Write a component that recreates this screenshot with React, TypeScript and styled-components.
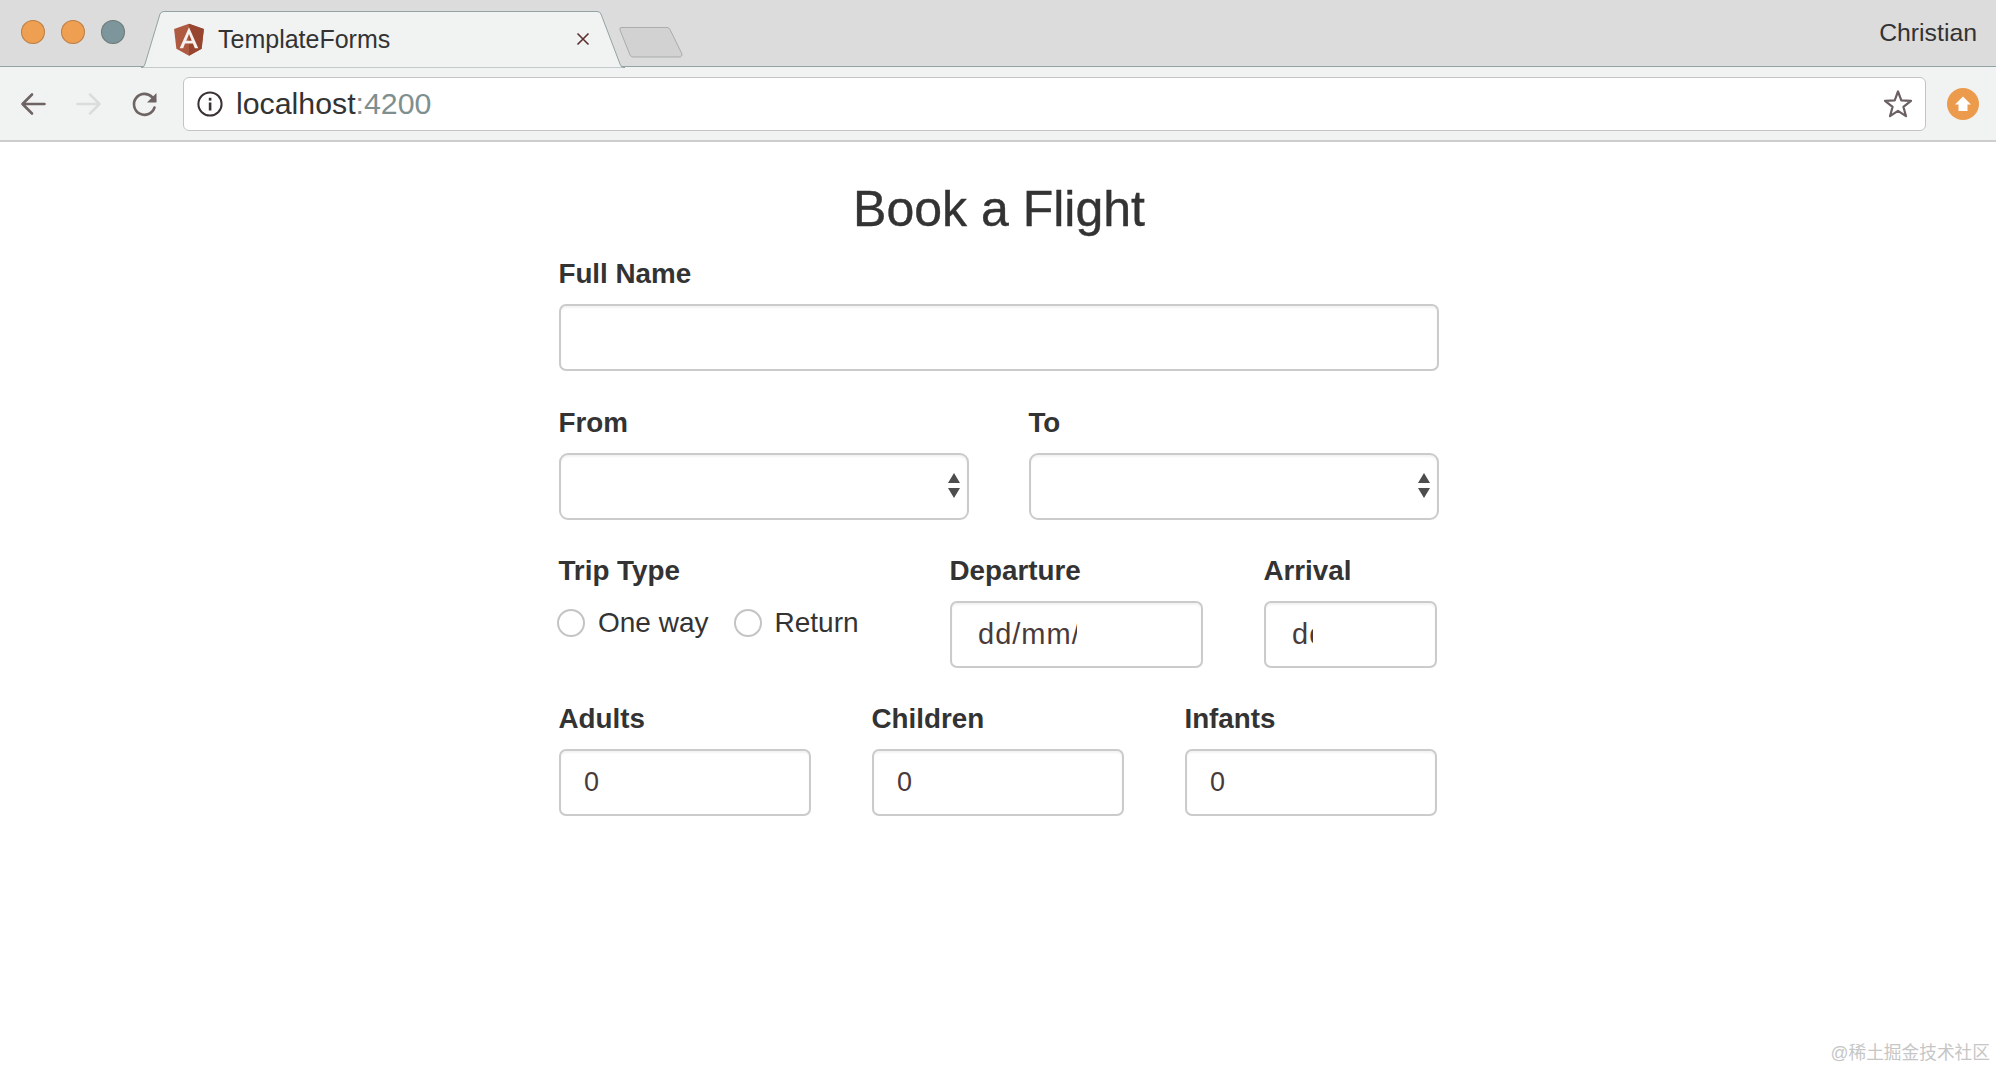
import * as React from "react";
import styled, { createGlobalStyle } from "styled-components";

const FLIGHT_FONT = `"Liberation Sans", Arial, sans-serif`;

const GlobalStyle = createGlobalStyle`
  html, body {
    margin: 0;
    padding: 0;
    height: 100%;
    background: #fff;
    overflow: hidden;
  }
  body {
    font-family: ${FLIGHT_FONT};
    color: #333;
  }
`;

export default function App() {
  return (
    <>
      <GlobalStyle />
      <Page>
        <TabStrip>
          <Lights>
            <Light color="#ef9f52" />
            <Light color="#ef9f52" />
            <Light color="#7c969c" />
          </Lights>
          <Tab>
            <TabShape viewBox="0 0 484 57" preserveAspectRatio="none">
              <path
                d="M0 56.5 H1 Q3 56.5 4 53 L19 3 Q20 0.5 23 0.5 H456 Q459 0.5 460 3 L479 53 Q480 56.5 483 56.5 H484 V57 H0 Z"
                fill="#f1f2f2"
                stroke="#93a3a3"
                strokeWidth="1"
              />
            </TabShape>
            <AngularLogo viewBox="0 0 250 250">
              <polygon points="125,30 31.9,63.2 46.1,186.3 125,230 203.9,186.3 218.1,63.2" fill="#ad5a40" />
              <polygon points="125,30 125,230 203.9,186.3 218.1,63.2" fill="#97452f" />
              <path
                d="M125 52.1 66.8 182.6h21.7l11.7-29.2h49.4l11.7 29.2h21.7L125 52.1zM142 135.4h-34l17-40.9 17 40.9z"
                fill="#f4f1ee"
              />
            </AngularLogo>
            <TabTitle>TemplateForms</TabTitle>
            <TabClose viewBox="0 0 14 14">
              <path d="M1.5 1.5 12.5 12.5M12.5 1.5 1.5 12.5" stroke="#5e2f2f" strokeWidth="1.6" />
            </TabClose>
          </Tab>
          <NewTab viewBox="0 0 64 32">
            <path
              d="M2 1.5H48Q50 1.5 51 3.5L62.5 27Q64 31 60 31H14Q12 31 11 29L1 4Q0.5 1.5 2 1.5Z"
              fill="#d2d2d2"
              stroke="#a9adad"
            />
          </NewTab>
          <ProfileName>Christian</ProfileName>
        </TabStrip>

        <Toolbar>
          <NavIcon viewBox="0 0 28 28" stroke="#6e6464">
            <path d="M25.5 14H3.5M13 4.5 3.5 14l9.5 9.5" />
          </NavIcon>
          <NavIcon viewBox="0 0 28 28" stroke="#dcdcdc">
            <path d="M2.5 14h22M15 4.5l9.5 9.5-9.5 9.5" />
          </NavIcon>
          <NavIcon viewBox="0 0 28 28" stroke="#6e6464">
            <path d="M23.5 17.5A10.5 10.5 0 1 1 21 7L24 10" />
            <path d="M25.5 3v9.5H16z" fill="#6e6464" stroke="none" />
          </NavIcon>
          <AddressBar>
            <InfoIcon viewBox="0 0 26 26">
              <circle cx="13" cy="13" r="11.6" fill="none" stroke="#3a3232" strokeWidth="2" />
              <rect x="11.8" y="11.5" width="2.6" height="8" fill="#3a3232" />
              <rect x="11.8" y="6.8" width="2.6" height="2.8" fill="#3a3232" />
            </InfoIcon>
            <UrlHost>
              localhost<UrlPort>:4200</UrlPort>
            </UrlHost>
            <StarIcon viewBox="0 0 30 30">
              <path
                d="M15 2.5 18.3 11.4 28 11.8 20.4 17.8 23 27.2 15 21.8 7 27.2 9.6 17.8 2 11.8 11.7 11.4Z"
                fill="none"
                stroke="#6a5f62"
                strokeWidth="2.2"
                strokeLinejoin="round"
              />
            </StarIcon>
          </AddressBar>
          <UpdateBadge viewBox="0 0 32 32">
            <circle cx="16" cy="16" r="16" fill="#ec9b4d" />
            <path d="M16 8.5 24 16.5H20.5V23H11.5V16.5H8Z" fill="#fff" />
          </UpdateBadge>
        </Toolbar>

        <FormColumn>
          <Title>Book a Flight</Title>

          <Field>
            <Label>Full Name</Label>
            <TextInput type="text" />
          </Field>

          <TwoColumns>
            <Field>
              <Label>From</Label>
              <SelectField />
            </Field>
            <Field>
              <Label>To</Label>
              <SelectField />
            </Field>
          </TwoColumns>

          <TripColumns>
            <Field>
              <Label>Trip Type</Label>
              <RadioGroup>
                <RadioOption>
                  <Radio type="radio" name="trip" />
                  One way
                </RadioOption>
                <RadioOption>
                  <Radio type="radio" name="trip" />
                  Return
                </RadioOption>
              </RadioGroup>
            </Field>
            <Field>
              <Label>Departure</Label>
              <DateInput type="text" readOnly value="dd/mm/yyyy" $clip={124} />
            </Field>
            <Field>
              <Label>Arrival</Label>
              <DateInput type="text" readOnly value="dd/mm/yyyy" $clip={122} />
            </Field>
          </TripColumns>

          <ThreeColumns>
            <Field>
              <Label>Adults</Label>
              <TextInput type="text" defaultValue="0" />
            </Field>
            <Field>
              <Label>Children</Label>
              <TextInput type="text" defaultValue="0" />
            </Field>
            <Field>
              <Label>Infants</Label>
              <TextInput type="text" defaultValue="0" />
            </Field>
          </ThreeColumns>
        </FormColumn>

        <Watermark>@稀土掘金技术社区</Watermark>
      </Page>
    </>
  );
}

function SelectField() {
  return (
    <SelectWrap>
      <Select>
        <option value="" />
      </Select>
      <SelectArrows viewBox="0 0 12 25">
        <path d="M6 0 12 10H0Z M0 15H12L6 25Z" fill="#4d4d4d" />
      </SelectArrows>
    </SelectWrap>
  );
}

/**
 * Browser chrome
 */

const Page = styled.div`
  position: relative;
  width: 1996px;
  height: 1068px;
  overflow: hidden;
  background: #fff;
`;

const TabStrip = styled.div`
  height: 67px;
  box-sizing: border-box;
  display: flex;
  align-items: flex-end;
  background: #dcdcdc;
  border-bottom: 1px solid #93a3a3;
`;

const Lights = styled.div`
  align-self: flex-start;
  display: flex;
  gap: 16px;
  padding: 20px 0 0 21px;
  width: 141px;
  flex: none;
  box-sizing: border-box;
`;

const Light = styled.span<{ color: string }>`
  flex: none;
  width: 24px;
  height: 24px;
  border-radius: 50%;
  background: ${(p) => p.color};
  box-shadow: inset 0 0 0 1px rgba(90, 70, 50, 0.35);
`;

const Tab = styled.div`
  position: relative;
  width: 484px;
  height: 56px;
  margin-bottom: -1px;
  flex: none;
  display: flex;
  align-items: center;
  padding: 0 35px 0 32px;
  box-sizing: border-box;
`;

const TabShape = styled.svg`
  position: absolute;
  left: 0;
  top: 0;
  width: 100%;
  height: 57px;
`;

const AngularLogo = styled.svg`
  position: relative;
  flex: none;
  width: 40px;
  height: 40px;
  margin: 0 9px 0 -4px;
`;

const TabTitle = styled.span`
  position: relative;
  flex: 1;
  font-size: 25px;
  color: #333;
  white-space: nowrap;
`;

const TabClose = styled.svg`
  position: relative;
  flex: none;
  width: 14px;
  height: 14px;
`;

const NewTab = styled.svg`
  flex: none;
  width: 64px;
  height: 32px;
  margin: 0 0 8px -6px;
`;

const ProfileName = styled.span`
  margin-left: auto;
  align-self: flex-start;
  padding: 19px 19px 0 0;
  font-size: 24.8px;
  line-height: 28px;
  color: #333;
`;

const Toolbar = styled.div`
  height: 75px;
  box-sizing: border-box;
  display: flex;
  align-items: center;
  padding: 0 17px 0 19px;
  background: #f1f2f2;
  border-bottom: 2px solid #cdcdcd;
`;

const NavIcon = styled.svg`
  flex: none;
  width: 28px;
  height: 28px;
  margin-right: 28px;
  fill: none;
  stroke-width: 2.6;
  stroke-linecap: round;
  stroke-linejoin: round;

  &:nth-of-type(3) {
    margin-right: 24px;
  }
`;

const AddressBar = styled.div`
  flex: 1;
  height: 54px;
  box-sizing: border-box;
  display: flex;
  align-items: center;
  padding: 0 12px 0 13px;
  background: #fff;
  border: 1.5px solid #c4c4c4;
  border-radius: 6px;
`;

const InfoIcon = styled.svg`
  flex: none;
  width: 26px;
  height: 26px;
  margin-right: 13px;
`;

const UrlHost = styled.span`
  flex: 1;
  font-size: 30.3px;
  color: #333;
`;

const UrlPort = styled.span`
  color: #7f8f8f;
`;

const StarIcon = styled.svg`
  flex: none;
  width: 30px;
  height: 30px;
`;

const UpdateBadge = styled.svg`
  flex: none;
  width: 32px;
  height: 32px;
  margin-left: 21px;
`;

/**
 * Form
 */

const FormColumn = styled.main`
  width: 881px;
  margin: 0 0 0 558px;
  padding: 39px 0 0 1px;
  box-sizing: border-box;
  display: flex;
  flex-direction: column;
  gap: 36px;
`;

const Title = styled.h1`
  margin: 0 0 -14px;
  font-size: 50px;
  font-weight: 400;
  line-height: 56px;
  text-align: center;
  color: #333;
  -webkit-text-stroke: 0.4px #333;
`;

const Field = styled.div`
  display: flex;
  flex-direction: column;
  min-width: 0;
`;

const Label = styled.label`
  display: block;
  margin: 0 0 15px -0.6px;
  font-size: 27.8px;
  font-weight: 700;
  line-height: 30px;
  color: #333;
`;

const TextInput = styled.input`
  display: block;
  width: 100%;
  height: 67px;
  box-sizing: border-box;
  padding: 0 23px;
  font-family: inherit;
  font-size: 27px;
  color: #4a3a3a;
  background: #fff;
  border: 2px solid #cbcbcb;
  border-radius: 7px;
  box-shadow: inset 0 2px 2px rgba(0, 0, 0, 0.05);
  outline: none;
`;

const DateInput = styled(TextInput)<{ $clip: number }>`
  padding: 0 ${(p) => p.$clip}px 0 26px;
  font-size: 29px;
  letter-spacing: 1px;
`;

const TwoColumns = styled.div`
  display: grid;
  grid-template-columns: 410px 410px;
  column-gap: 60px;
  margin-top: 1px;
`;

const TripColumns = styled.div`
  display: grid;
  grid-template-columns: 330px 253px 173px;
  column-gap: 61px;
`;

const ThreeColumns = styled.div`
  display: grid;
  grid-template-columns: 252px 252px 252px;
  column-gap: 61px;
`;

const SelectWrap = styled.div`
  position: relative;
`;

const Select = styled.select`
  display: block;
  width: 100%;
  height: 67px;
  box-sizing: border-box;
  appearance: none;
  background: #fff;
  border: 2px solid #cbcbcb;
  border-radius: 9px;
  box-shadow: inset 0 2px 2px rgba(0, 0, 0, 0.05);
  outline: none;
`;

const SelectArrows = styled.svg`
  position: absolute;
  right: 9px;
  top: 20px;
  width: 12px;
  height: 25px;
  pointer-events: none;
`;

const RadioGroup = styled.div`
  display: flex;
  align-items: center;
  gap: 25px;
  height: 44px;
  margin-left: -2px;
`;

const RadioOption = styled.label`
  display: flex;
  align-items: center;
  gap: 13px;
  font-size: 28px;
  color: #333;
`;

const Radio = styled.input`
  appearance: none;
  flex: none;
  width: 28px;
  height: 28px;
  margin: 0;
  background: #fff;
  border: 2px solid #c4c4c4;
  border-radius: 50%;
`;

const Watermark = styled.div`
  position: absolute;
  right: 6px;
  bottom: 4px;
  font-family: "Liberation Sans", "Noto Sans CJK SC", sans-serif;
  font-size: 17.7px;
  line-height: 22px;
  color: #c6c6c6;
`;
